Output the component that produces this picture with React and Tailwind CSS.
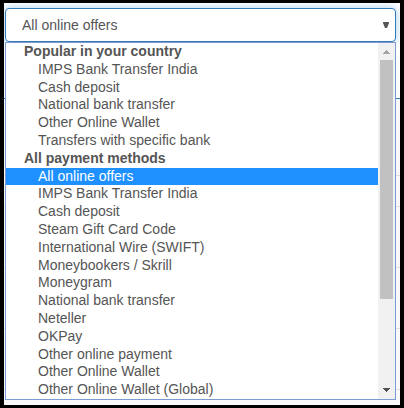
import { useState } from "react";

const groups = [
  {
    label: "Popular in your country",
    options: [
      "IMPS Bank Transfer India",
      "Cash deposit",
      "National bank transfer",
      "Other Online Wallet",
      "Transfers with specific bank",
    ],
  },
  {
    label: "All payment methods",
    options: [
      "All online offers",
      "IMPS Bank Transfer India",
      "Cash deposit",
      "Steam Gift Card Code",
      "International Wire (SWIFT)",
      "Moneybookers / Skrill",
      "Moneygram",
      "National bank transfer",
      "Neteller",
      "OKPay",
      "Other online payment",
      "Other Online Wallet",
      "Other Online Wallet (Global)",
    ],
  },
];

// The offers table that the open menu covers.
function TableBehind() {
  return (
    <div aria-hidden="true" className="absolute inset-0 flex flex-col bg-white">
      <div className="h-24 border-b border-[#337ab7]" />
      <div className="flex grow flex-col bg-[#f9f9fc]">
        <div className="h-[77px] border-b border-[#dddddd]" />
        <div className="h-[31px] border-b border-[#dddddd]" />
        <div className="h-[61px] border-b border-[#dddddd]" />
        <div className="h-[61px] border-b border-[#dddddd]" />
        <div className="h-[61px] border-b border-[#dddddd]" />
      </div>
    </div>
  );
}

function ScrollBar() {
  return (
    <div aria-hidden="true" className="flex w-[17px] flex-col items-center bg-[#f1f1f1]">
      <svg className="h-[17px] w-[17px] shrink-0" viewBox="0 0 17 17" shapeRendering="crispEdges">
        <path d="M8 7h1v1h1v1h1v1h1v1H5v-1h1V9h1V8h1z" fill="#a3a3a3" />
      </svg>
      <div className="h-[239px] w-[13px] bg-[#c1c1c1]" />
      <svg className="mt-auto h-[17px] w-[17px] shrink-0" viewBox="0 0 17 17" shapeRendering="crispEdges">
        <path d="M5 6h7v1h-1v1h-1v1H9v1H8V9H7V8H6V7H5z" fill="#505050" />
      </svg>
    </div>
  );
}

export default function App() {
  const [selected, setSelected] = useState("1-0");
  const [group, option] = selected.split("-").map(Number);
  const value = groups[group].options[option];

  return (
    <div className="min-h-screen border-x-4 border-t-[3px] border-b-[3px] border-black bg-black font-['Liberation_Sans',Arial,sans-serif] text-sm text-[#555555]">
      <div className="relative overflow-hidden pt-[5px] pr-1 pb-[5px] pl-px">
        <TableBehind />
        <div className="relative">
          <button
            type="button"
            aria-haspopup="listbox"
            aria-expanded="true"
            aria-controls="methods"
            className="flex h-[34px] w-full items-center justify-between rounded border border-[#337ab7] bg-white pr-[6px] pl-4 shadow-[0_0_8px_#66afe999]"
          >
            <span>{value}</span>
            <svg className="h-[6px] w-[6px]" viewBox="0 0 6 6" aria-hidden="true">
              <path d="M0 0h6v1L4 6H2L0 1z" fill="#555555" />
            </svg>
          </button>
          <div className="flex h-[358px] border border-[#7b9bd2] bg-white">
            <div
              id="methods"
              role="listbox"
              aria-label="Payment method"
              className="grid grow auto-rows-fr"
            >
              {groups.map((g, gi) => (
                <div key={g.label} role="group" aria-label={g.label} className="contents">
                  <div className="flex min-h-0 items-start pl-[18px] leading-4 font-bold">{g.label}</div>
                  {g.options.map((o, oi) => {
                    const id = `${gi}-${oi}`;
                    const active = id === selected;
                    return (
                      <button
                        key={id}
                        type="button"
                        role="option"
                        aria-selected={active}
                        onClick={() => setSelected(id)}
                        className={`flex min-h-0 items-start pl-8 text-left leading-4 ${
                          active ? "bg-[#1e90ff] text-white" : ""
                        }`}
                      >
                        {o}
                      </button>
                    );
                  })}
                </div>
              ))}
            </div>
            <ScrollBar />
          </div>
        </div>
      </div>
    </div>
  );
}
